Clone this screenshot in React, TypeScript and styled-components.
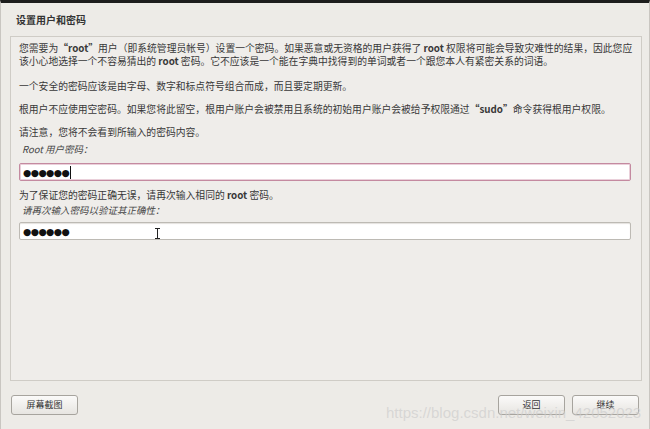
import React from 'react';
import styled, { createGlobalStyle } from 'styled-components';

const GlobalStyle = createGlobalStyle`
  html, body {
    margin: 0;
    padding: 0;
    background: #edebe7;
  }
  body {
    font-family: "Noto Sans CJK SC", "DejaVu Sans", sans-serif;
    color: #2e2e2e;
  }
`;

const Window = styled.div`
  box-sizing: border-box;
  width: 650px;
  height: 429px;
  display: flex;
  flex-direction: column;
  border-top: 3px solid #1d1d1d;
  border-left: 1px solid #c9c6c1;
  border-right: 1px solid #c9c6c1;
  background: #edebe7;
  position: relative;
  overflow: hidden;
`;

const Title = styled.h1`
  margin: 0;
  height: 33px;
  display: flex;
  align-items: center;
  padding-left: 15px;
  font-size: 10px;
  font-weight: 700;
  color: #333;
`;

const Panel = styled.section`
  flex: 1;
  margin: 0 7px 0 9px;
  border: 1px solid #cfccc6;
  background: #efedea;
  padding: 5px 8px 0 8px;
`;

const Para = styled.p<{ $gap?: number }>`
  margin: 0 0 ${p => p.$gap ?? 10}px;
  font-size: 9.8px;
  line-height: 13px;
  color: #383838;
`;

const Label = styled.div<{ $tight?: boolean }>`
  font-size: 9.5px;
  line-height: 13px;
  font-style: italic;
  color: #444;
  padding-left: 3px;
  margin: ${p => (p.$tight ? '2px 0 5px' : '4px 0 7px')};
`;

const Field = styled.div<{ $focused?: boolean }>`
  box-sizing: border-box;
  height: 18px;
  margin: 0 2px 8px 0;
  background: #fff;
  border: 1px solid ${p => (p.$focused ? '#c48aa0' : '#bdbab4')};
  border-radius: 2px;
  box-shadow: ${p => (p.$focused ? 'inset 0 0 0 1px #ead0da' : 'inset 0 1px 1px #e4e2de')};
  display: flex;
  align-items: center;
  padding-left: 3px;
  position: relative;
`;

const Dots = styled.span`
  font-family: "DejaVu Sans", sans-serif;
  font-size: 9.5px;
  letter-spacing: -0.6px;
  color: #111;
`;

const Caret = styled.span`
  display: inline-block;
  width: 1px;
  height: 13px;
  background: #111;
  margin-left: 1px;
`;

const IBeam = styled.svg`
  position: absolute;
  left: 134px;
  top: 5px;
`;

const Footer = styled.footer`
  height: 47px;
  display: flex;
  align-items: center;
  justify-content: space-between;
  padding: 0 10px 1px 10px;
`;

const ButtonRow = styled.div`
  display: flex;
  gap: 7px;
`;

const Button = styled.button`
  box-sizing: border-box;
  width: 67px;
  height: 20px;
  border: 1px solid #a7a49e;
  border-radius: 3px;
  background: linear-gradient(#fbfaf9, #e7e5e1);
  font-family: "Noto Sans CJK SC", sans-serif;
  font-size: 9px;
  color: #333;
  padding: 0;
`;

const Watermark = styled.div`
  position: absolute;
  left: 385px;
  top: 401px;
  font-family: "Liberation Sans", Arial, sans-serif;
  font-size: 15px;
  color: rgba(205, 205, 205, 0.7);
  white-space: nowrap;
  pointer-events: none;
`;

export default function App() {
  return (
    <>
      <GlobalStyle />
      <Window>
        <Title>设置用户和密码</Title>
        <Panel>
          <Para $gap={12}>
            您需要为<b>“root”</b>用户（即系统管理员帐号）设置一个密码。如果恶意或无资格的用户获得了 <b>root</b> 权限将可能会导致灾难性的结果，因此您应该小心地选择一个不容易猜出的 <b>root</b> 密码。它不应该是一个能在字典中找得到的单词或者一个跟您本人有紧密关系的词语。
          </Para>
          <Para>一个安全的密码应该是由字母、数字和标点符号组合而成，而且要定期更新。</Para>
          <Para>
            根用户不应使用空密码。如果您将此留空，根用户账户会被禁用且系统的初始用户账户会被给予权限通过<b>“sudo”</b>命令获得根用户权限。
          </Para>
          <Para $gap={0}>请注意，您将不会看到所输入的密码内容。</Para>
          <Label>Root 用户密码：</Label>
          <Field $focused>
            <Dots>●●●●●●</Dots>
            <Caret />
          </Field>
          <Para $gap={0}>
            为了保证您的密码正确无误，请再次输入相同的 <b>root</b> 密码。
          </Para>
          <Label $tight>请再次输入密码以验证其正确性：</Label>
          <Field>
            <Dots>●●●●●●</Dots>
            <IBeam width="7" height="11" viewBox="0 0 7 11">
              <path d="M1 0.5h5M3.5 0.5v10M1 10.5h5" stroke="#222" strokeWidth="1" fill="none" />
            </IBeam>
          </Field>
        </Panel>
        <Footer>
          <Button>屏幕截图</Button>
          <ButtonRow>
            <Button>返回</Button>
            <Button>继续</Button>
          </ButtonRow>
        </Footer>
        <Watermark>https://blog.csdn.net/weixin_42052023</Watermark>
      </Window>
    </>
  );
}
